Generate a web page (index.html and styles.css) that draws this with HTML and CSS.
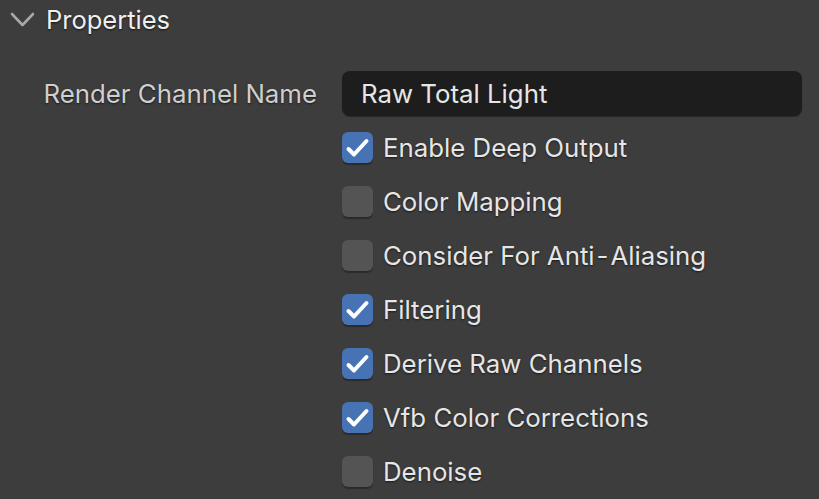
FILE: index.html
```html
<!DOCTYPE html>
<html>
<head>
<meta charset="utf-8">
<link rel="stylesheet" href="styles.css">
</head>
<body>
<div class="panel">
  <div class="header">
    <svg class="chevron" width="26" height="16" viewBox="0 0 26 16"><path d="M2 2 L12.5 13 L23 2" fill="none" stroke="#a8a8a8" stroke-width="2.6" stroke-linecap="round" stroke-linejoin="round"/></svg>
    <span class="title">Properties</span>
  </div>
  <div class="rows">
    <div class="row">
      <div class="label">Render Channel Name</div>
      <div class="field">Raw Total Light</div>
    </div>
    <div class="row">
      <div class="label"></div>
      <div class="check on"><svg viewBox="0 0 31 31" width="31" height="31"><path d="M6.5 17 L12 22.5 L24.5 9" fill="none" stroke="#fff" stroke-width="4" stroke-linecap="round" stroke-linejoin="round"/></svg></div>
      <div class="ctext">Enable Deep Output</div>
    </div>
    <div class="row">
      <div class="label"></div>
      <div class="check"></div>
      <div class="ctext">Color Mapping</div>
    </div>
    <div class="row">
      <div class="label"></div>
      <div class="check"></div>
      <div class="ctext">Consider For Anti<span class="dash">-</span>Aliasing</div>
    </div>
    <div class="row">
      <div class="label"></div>
      <div class="check on"><svg viewBox="0 0 31 31" width="31" height="31"><path d="M6.5 17 L12 22.5 L24.5 9" fill="none" stroke="#fff" stroke-width="4" stroke-linecap="round" stroke-linejoin="round"/></svg></div>
      <div class="ctext">Filtering</div>
    </div>
    <div class="row">
      <div class="label"></div>
      <div class="check on"><svg viewBox="0 0 31 31" width="31" height="31"><path d="M6.5 17 L12 22.5 L24.5 9" fill="none" stroke="#fff" stroke-width="4" stroke-linecap="round" stroke-linejoin="round"/></svg></div>
      <div class="ctext">Derive Raw Channels</div>
    </div>
    <div class="row">
      <div class="label"></div>
      <div class="check on"><svg viewBox="0 0 31 31" width="31" height="31"><path d="M6.5 17 L12 22.5 L24.5 9" fill="none" stroke="#fff" stroke-width="4" stroke-linecap="round" stroke-linejoin="round"/></svg></div>
      <div class="ctext">Vfb Color Corrections</div>
    </div>
    <div class="row">
      <div class="label"></div>
      <div class="check"></div>
      <div class="ctext">Denoise</div>
    </div>
  </div>
</div>
</body>
</html>
```
FILE: styles.css
```css
html, body {
  margin: 0;
  padding: 0;
  background: #3d3d3d;
  width: 819px;
  height: 499px;
  overflow: hidden;
}
.panel {
  font-family: Inter, "Noto Sans", sans-serif;
  font-size: 25.8px;
  color: #e6e6e6;
}
.header {
  height: 38px;
  display: flex;
  align-items: center;
  padding-left: 10px;
}
.chevron {
  display: block;
  margin-top: 2px;
}
.title {
  margin-left: 10px;
  font-size: 25.5px;
  color: #f0f0f0;
  text-shadow: 0 1px 2px rgba(0,0,0,0.7);
}
.rows {
  padding-top: 28px;
}
.row {
  height: 54px;
  display: flex;
  align-items: center;
}
.label {
  width: 317px;
  padding-right: 25px;
  text-align: right;
  color: #cfcfcf;
  text-shadow: 0 1px 2px rgba(0,0,0,0.6);
  flex: none;
}
.field {
  width: 441px;
  height: 45px;
  background: #1d1d1d;
  border-radius: 8px;
  box-shadow: 0 1px 1px rgba(0,0,0,0.35);
  padding-left: 19px;
  display: flex;
  align-items: center;
  color: #e6e6e6;
}
.check {
  width: 31px;
  height: 31px;
  border-radius: 6px;
  background: #545454;
  box-shadow: 0 2px 1px rgba(0,0,0,0.3);
  flex: none;
}
.check svg { display: block; }
.check.on {
  background: #4772b3;
}
.ctext {
  margin-left: 10px;
  text-shadow: 0 1px 2px rgba(0,0,0,0.6);
}
.dash {
  padding: 0 2px;
}
```
